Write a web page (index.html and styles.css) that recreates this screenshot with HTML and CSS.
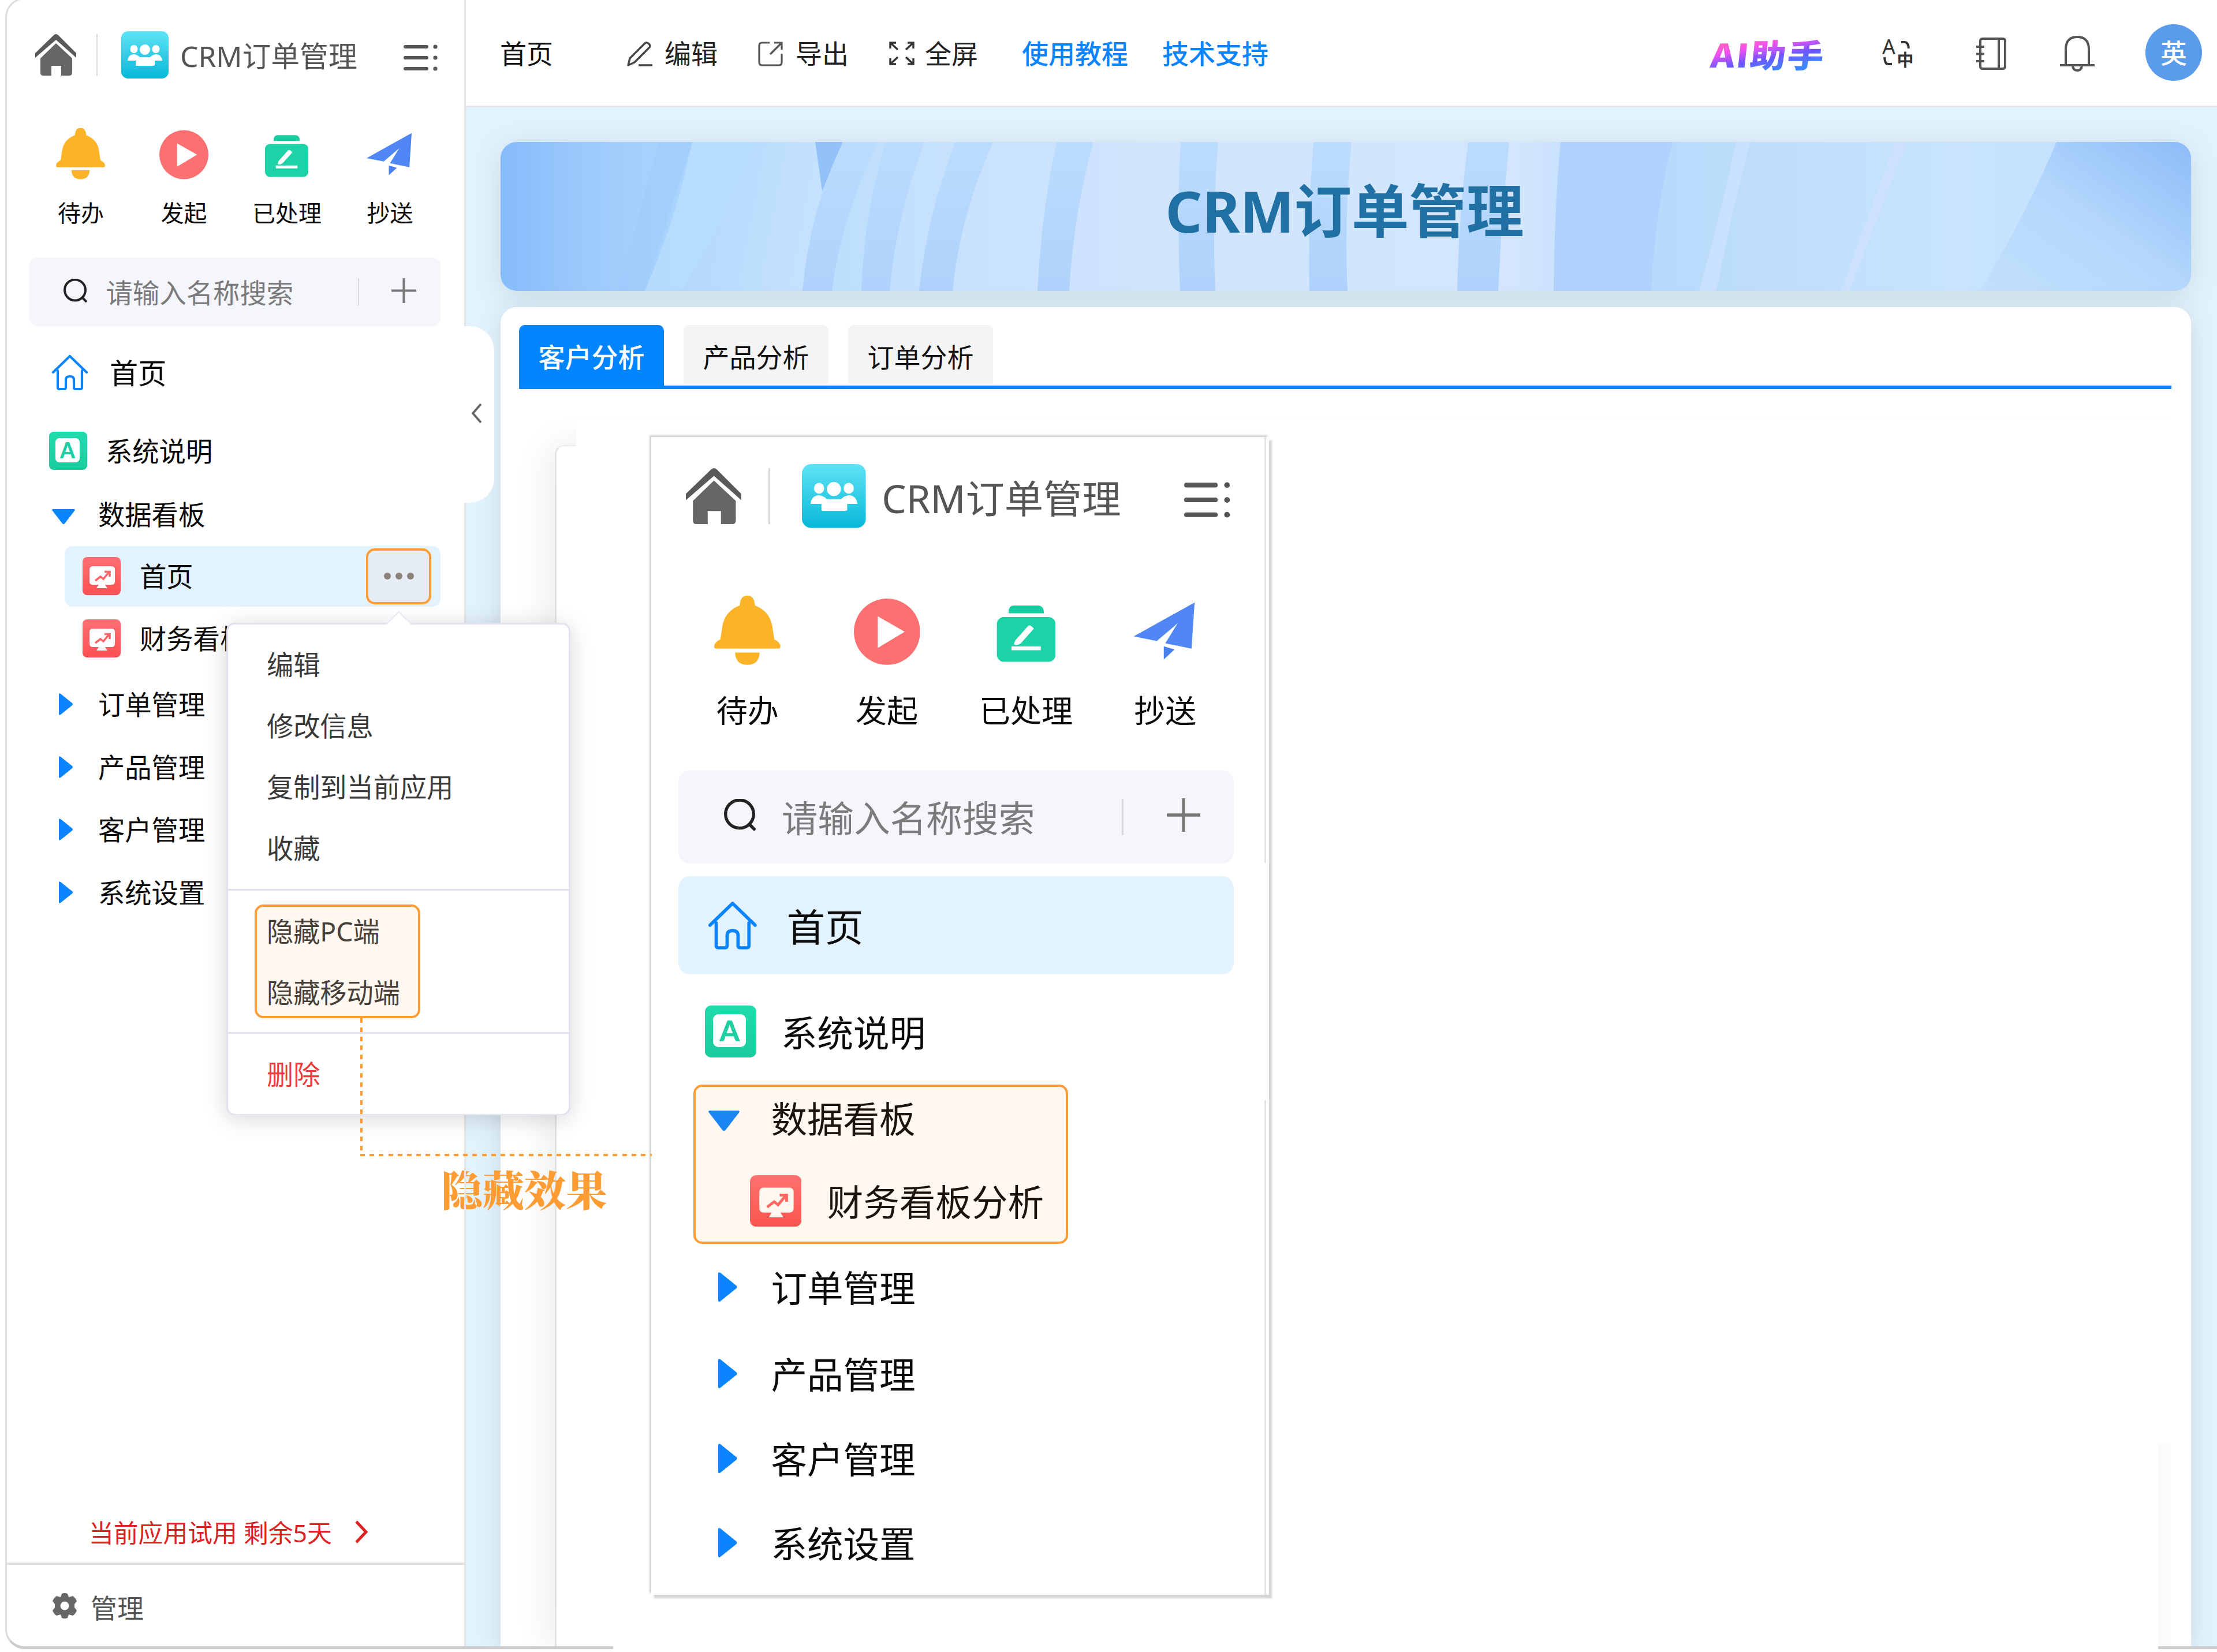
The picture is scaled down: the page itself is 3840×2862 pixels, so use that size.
FILE: index.html
```
<!DOCTYPE html>
<html lang="zh-CN">
<head>
  <meta charset="UTF-8">
  <meta name="viewport" content="width=device-width, initial-scale=1.0">
  <title>CRM订单管理</title>
  <link rel="stylesheet" href="styles.css">
</head>
<body>
<svg class="defs" width="0" height="0">
  <defs>
    <linearGradient id="gCyan" x1="0" y1="0" x2="0" y2="1"><stop offset="0" stop-color="#5fe3f5"/><stop offset="1" stop-color="#07b8d8"/></linearGradient>
    <linearGradient id="gRed" x1="0" y1="0" x2="0" y2="1"><stop offset="0" stop-color="#ff6f72"/><stop offset="1" stop-color="#fb5052"/></linearGradient>
  </defs>
  <symbol id="i-house" viewBox="0 0 71 72">
    <path d="M36 0Q38 0 40 2L71 33V41L36 10L0 41V33L32 2Q34 0 36 0Z" fill="#595959"/>
    <path d="M36 16L64 42V67Q64 72 59 72H45V55H28V72H14Q9 72 9 67V42Z" fill="#666"/>
  </symbol>
  <symbol id="i-app" viewBox="0 0 82 82">
    <rect width="82" height="82" rx="12" fill="url(#gCyan)"/>
    <g fill="#fff">
      <ellipse cx="22" cy="31" rx="6.5" ry="7"/><ellipse cx="60" cy="31" rx="6.5" ry="7"/><circle cx="41" cy="32" r="9"/>
      <path d="M11 51Q12 41 21 40Q27 40 32 45H50Q55 40 61 40Q70 41 71 51H58V59Q57 60 55 60H27Q25 60 25 59V51Z"/>
    </g>
  </symbol>
  <symbol id="i-list" viewBox="0 0 59 46">
    <g fill="#555"><rect y="1" width="43" height="6" rx="3"/><rect y="20" width="43" height="6" rx="3"/><rect y="39" width="43" height="6" rx="3"/>
    <circle cx="55" cy="4" r="3.6"/><circle cx="55" cy="23" r="3.6"/><circle cx="55" cy="42" r="3.6"/></g>
  </symbol>
  <symbol id="i-todo" viewBox="0 0 86 90">
    <g fill="#fbb428"><path d="M43 0Q52 0 53 13Q74 21 76 44L78 57Q86 61 86 66Q86 69 83 69H3Q0 69 0 66Q0 61 8 57L10 44Q12 21 33 13Q34 0 43 0Z"/><path d="M27 74H59Q58 90 43 90Q28 90 27 74Z"/></g>
  </symbol>
  <symbol id="i-play" viewBox="0 0 86 90"><circle cx="43" cy="47" r="43" fill="#fd7072"/><path d="M31 27L66 47L31 68Z" fill="#fff"/></symbol>
  <symbol id="i-done" viewBox="0 0 86 90">
    <path d="M20 23Q20 13 27 13H58Q66 13 66 23Z" fill="#16cda0"/>
    <rect x="5" y="28" width="76" height="58" rx="9" fill="#1ed2a7"/>
    <path d="M46 39Q49 38 53 43L36 62Q30 66 27 63L29 58Z" fill="#fff"/><rect x="24" y="66" width="38" height="5" fill="#fff"/>
  </symbol>
  <symbol id="i-send" viewBox="0 0 86 90">
    <path d="M81 9L77 69L43 62L59 36L32 59L2 53Z" fill="#5087f4"/><path d="M41 66L55 70L41 83Z" fill="#4a80ee"/>
  </symbol>
  <symbol id="i-search" viewBox="0 0 41 41"><circle cx="20" cy="19.500" r="18" fill="none" stroke="#222" stroke-width="4"/><path d="M32 32L40 40" stroke="#222" stroke-width="4"/></symbol>
  <symbol id="i-plus" viewBox="0 0 43 43"><path d="M21.500 0V43M0 21.500H43" stroke="#777" stroke-width="4"/></symbol>
  <symbol id="i-home" viewBox="0 0 62 62">
    <path d="M2 31L31 3L60 31M10 28V57Q10 60 13 60H21Q24 60 24 57V44Q24 38 31 38Q38 38 38 44V57Q38 60 41 60H49Q52 60 52 57V28" fill="none" stroke="#0a84ff" stroke-width="4.200" stroke-linecap="round" stroke-linejoin="round"/>
  </symbol>
  <symbol id="i-board" viewBox="0 0 66 66">
    <rect width="66" height="66" rx="8" fill="url(#gRed)"/>
    <path d="M18 16H50Q56 16 56 22V42Q56 48 50 48H39L43 54H24L28 48H18Q12 48 12 42V22Q12 16 18 16Z" fill="#fff"/>
    <path d="M22 41L31 34L36 38L46 26M38 25.500H47V34" fill="none" stroke="#ff6466" stroke-width="3.500"/>
  </symbol>
  <symbol id="i-down" viewBox="0 0 40 26"><path d="M2 0H38Q41 0 39 3L22 25Q20 27 18 25L1 3Q-1 0 2 0Z" fill="#0a84ff"/></symbol>
  <symbol id="i-right" viewBox="0 0 24 38"><path d="M0 2Q0-1 3 1L23 17Q25 19 23 21L3 37Q0 39 0 36Z" fill="#0a84ff"/></symbol>
  <symbol id="i-edit" viewBox="0 0 44 44"><path d="M2 42L5 30L31 4Q34 1 38 5Q42 9 38 12L13 37ZM20 42H44" fill="none" stroke="#444" stroke-width="3.400" stroke-linejoin="round"/></symbol>
  <symbol id="i-export" viewBox="0 0 44 44"><path d="M20 3H7Q2 3 2 8V37Q2 42 7 42H36Q41 42 41 37V22M28 3H41V15M41 3L21 23" fill="none" stroke="#555" stroke-width="3.200"/></symbol>
  <symbol id="i-full" viewBox="0 0 44 44"><path d="M2 13V3H12M2 3L15 15M32 3H42V13M42 3L29 15M2 30V40H12M2 40L15 28M32 40H42V30M42 40L29 28" fill="none" stroke="#333" stroke-width="3.400"/></symbol>
  <symbol id="i-book" viewBox="0 0 52 56"><path d="M11 2H46Q50 2 50 6V50Q50 54 46 54H11Q7 54 7 50V6Q7 2 11 2ZM39 2V54M0 16H14M0 28.500H14M0 41H14" fill="none" stroke="#555" stroke-width="4"/></symbol>
  <symbol id="i-bell" viewBox="0 0 60 62"><path d="M10 50V22Q11 2 30 2Q49 2 50 22V50M0 51H60M22 52Q23 60 30 60Q37 60 38 52" fill="none" stroke="#555" stroke-width="4"/></symbol>
  <symbol id="i-gear" viewBox="0 0 44 44"><path fill-rule="evenodd" fill="#666" d="M17 1Q22-1 27 1L29 7L36 5Q41 8 43 14L39 19V25L43 30Q41 36 36 39L29 37L27 43Q22 45 17 43L15 37L8 39Q3 36 1 30L5 25V19L1 14Q3 8 8 5L15 7ZM22 14.500A7.500 7.500 0 1 0 22 29.500A7.500 7.500 0 1 0 22 14.500Z"/></symbol>
</svg>

<div class="frame">
  <aside class="sidebar">
    <div class="nav">
      <div class="nav-top">
        <svg class="ico-house"><use href="#i-house"/></svg>
        <i class="bar"></i>
        <svg class="ico-app"><use href="#i-app"/></svg>
        <span class="app-name">CRM订单管理</span>
        <svg class="ico-list"><use href="#i-list"/></svg>
      </div>
      <div class="quick">
        <div><svg><use href="#i-todo"/></svg><span>待办</span></div>
        <div><svg><use href="#i-play"/></svg><span>发起</span></div>
        <div><svg><use href="#i-done"/></svg><span>已处理</span></div>
        <div><svg><use href="#i-send"/></svg><span>抄送</span></div>
      </div>
      <div class="search">
        <svg class="ico-search"><use href="#i-search"/></svg>
        <span class="placeholder">请输入名称搜索</span>
        <i class="bar"></i>
        <svg class="ico-plus"><use href="#i-plus"/></svg>
      </div>
      <div class="row home"><svg><use href="#i-home"/></svg><span>首页</span></div>
      <div class="row doc"><b class="ico-doc"><i>A</i></b><span>系统说明</span></div>
      <div class="row group open"><svg><use href="#i-down"/></svg><span>数据看板</span></div>
      <div class="row child active"><svg><use href="#i-board"/></svg><span>首页</span><b class="more"><i></i><i></i><i></i></b></div>
      <div class="row child second"><svg><use href="#i-board"/></svg><span>财务看板分析</span></div>
      <div class="row group first"><svg><use href="#i-right"/></svg><span>订单管理</span></div>
      <div class="row group"><svg><use href="#i-right"/></svg><span>产品管理</span></div>
      <div class="row group"><svg><use href="#i-right"/></svg><span>客户管理</span></div>
      <div class="row group"><svg><use href="#i-right"/></svg><span>系统设置</span></div>
    </div>
    <div class="trial">
      <span>当前应用试用 剩余5天</span>
      <svg viewBox="0 0 24 40"><path d="M3 2L20 20L3 38" fill="none" stroke="#dd2222" stroke-width="5"/></svg>
    </div>
    <div class="manage"><svg><use href="#i-gear"/></svg><span>管理</span></div>
    <div class="collapse"><svg viewBox="0 0 20 36"><path d="M17 2L3 18L17 34" fill="none" stroke="#666" stroke-width="3.800"/></svg></div>
  </aside>

  <main class="main">
    <header class="header">
      <span class="crumb">首页</span>
      <a class="act"><svg><use href="#i-edit"/></svg>编辑</a>
      <a class="act"><svg><use href="#i-export"/></svg>导出</a>
      <a class="act"><svg><use href="#i-full"/></svg>全屏</a>
      <a class="link">使用教程</a>
      <a class="link">技术支持</a>
      <span class="ai">AI助手</span>
      <svg class="ico-lang" viewBox="0 0 53 52">
        <text x="12.500" y="27" text-anchor="middle">A</text>
        <text class="zh" x="41" y="48" text-anchor="middle">中</text>
        <path d="M34 6H40Q46 6 47 17M5 32Q6 44 11 44H18" fill="none" stroke="#333" stroke-width="4"/>
      </svg>
      <svg class="ico-book"><use href="#i-book"/></svg>
      <svg class="ico-bell"><use href="#i-bell"/></svg>
      <span class="avatar">英</span>
    </header>
    <div class="content">
      <div class="banner">
        <svg viewBox="0 0 2928 258" preserveAspectRatio="none">
          <defs>
            <linearGradient id="bBase">
              <stop offset="0" stop-color="#86bbfb"/><stop offset=".05" stop-color="#9ccafc"/><stop offset=".1" stop-color="#a8d3fc"/>
              <stop offset=".2" stop-color="#bddffd"/><stop offset=".28" stop-color="#c8e2fd"/><stop offset=".38" stop-color="#d0e4fd"/>
              <stop offset=".6" stop-color="#d3e6fe"/><stop offset=".68" stop-color="#b9d9fc"/><stop offset=".75" stop-color="#bedefb"/>
              <stop offset=".86" stop-color="#c8e4fe"/><stop offset="1" stop-color="#c0dffd"/>
            </linearGradient>
            <linearGradient id="bRight" x1="0" y1="1" x2="1" y2="0"><stop offset="0" stop-color="#c2e0fd"/><stop offset=".5" stop-color="#b4d7fc"/><stop offset="1" stop-color="#8cbcf8"/></linearGradient>
            <linearGradient id="bStripe" x1="0" y1="0" x2="0" y2="1"><stop offset="0" stop-color="#bbdcfd"/><stop offset="1" stop-color="#afd2fc"/></linearGradient>
            <linearGradient id="bMid" x1="0" y1="0" x2="1" y2="0.200"><stop offset="0" stop-color="#b0d7fb"/><stop offset="1" stop-color="#c4e2fe"/></linearGradient>
          </defs>
          <rect width="2928" height="258" fill="url(#bBase)"/>
          <path d="M274 0H332L250 258H203Z" fill="#9fccfb" opacity=".6"/>
          <path d="M332 0H442Q390 140 313 258H250Q305 130 332 0Z" fill="#b9defd" opacity=".8"/>
          <path d="M442 0H547L557 85L523 258H313Q390 130 442 0Z" fill="url(#bMid)"/>
          <path d="M545 0H593L557 85Z" fill="#93c2fb"/>
          <path d="M593 0H654Q590 130 574 258H523Q535 120 593 0Z" fill="url(#bStripe)"/>
          <path d="M667 0H734Q685 130 674 258H625Q630 120 667 0Z" fill="url(#bStripe)"/>
          <path d="M788 0H853Q795 130 783 258H725Q740 120 788 0Z" fill="url(#bStripe)"/>
          <path d="M963 0H1027Q993 120 985 258H930Q937 120 963 0Z" fill="url(#bStripe)"/>
          <path d="M1178 0H1243Q1232 130 1238 258H1177Q1171 120 1178 0Z" fill="url(#bStripe)"/>
          <path d="M1408 0H1474Q1461 130 1467 258H1401Q1398 120 1408 0Z" fill="url(#bStripe)"/>
          <path d="M1676 0H1747Q1734 130 1728 258H1657Q1660 120 1676 0Z" fill="url(#bStripe)"/>
          <path d="M1836 0H2030Q2000 120 1993 258H1824Q1825 120 1836 0Z" fill="#afd3fd"/>
          <path d="M2140 0H2165Q2130 130 2106 258H2076Q2115 120 2140 0Z" fill="#c8e1fe"/>
          <path d="M2415 0H2437L2336 258H2322Z" fill="#cbe1fe"/>
          <path d="M2695 0H2928V258H2562Q2640 130 2695 0Z" fill="url(#bRight)"/>
        </svg>
        <h1>CRM订单管理</h1>
      </div>
      <section class="panel">
        <nav class="tabs">
          <span class="tab on">客户分析</span>
          <span class="tab">产品分析</span>
          <span class="tab">订单分析</span>
        </nav>
        <div class="board">
          <div class="sheet"></div>
          <div class="edge"></div>
        </div>
      </section>
    </div>
  </main>
</div>
<div class="mask"></div>

<!-- context menu of the active item -->
<div class="menu">
  <div class="menu-group">
    <span>编辑</span><span>修改信息</span><span>复制到当前应用</span><span>收藏</span>
  </div>
  <div class="menu-group hide-group">
    <span>隐藏PC端</span><span>隐藏移动端</span>
    <div class="mark mark-hide"></div>
  </div>
  <div class="menu-group"><span class="danger">删除</span></div>
</div>

<div class="wire-v"></div>
<div class="wire-h"></div>
<div class="note">隐藏效果</div>

<!-- sidebar after the item is hidden -->
<div class="preview">
  <div class="clip">
    <div class="nav">
      <div class="nav-top">
        <svg class="ico-house"><use href="#i-house"/></svg>
        <i class="bar"></i>
        <svg class="ico-app"><use href="#i-app"/></svg>
        <span class="app-name">CRM订单管理</span>
        <svg class="ico-list"><use href="#i-list"/></svg>
      </div>
      <div class="quick">
        <div><svg><use href="#i-todo"/></svg><span>待办</span></div>
        <div><svg><use href="#i-play"/></svg><span>发起</span></div>
        <div><svg><use href="#i-done"/></svg><span>已处理</span></div>
        <div><svg><use href="#i-send"/></svg><span>抄送</span></div>
      </div>
      <div class="search">
        <svg class="ico-search"><use href="#i-search"/></svg>
        <span class="placeholder">请输入名称搜索</span>
        <i class="bar"></i>
        <svg class="ico-plus"><use href="#i-plus"/></svg>
      </div>
      <div class="row home active"><svg><use href="#i-home"/></svg><span>首页</span></div>
      <div class="row doc"><b class="ico-doc"><i>A</i></b><span>系统说明</span></div>
      <div class="row group open"><svg><use href="#i-down"/></svg><span>数据看板</span></div>
      <div class="row child only"><svg><use href="#i-board"/></svg><span>财务看板分析</span></div>
      <div class="row group first"><svg><use href="#i-right"/></svg><span>订单管理</span></div>
      <div class="row group next"><svg><use href="#i-right"/></svg><span>产品管理</span></div>
      <div class="row group"><svg><use href="#i-right"/></svg><span>客户管理</span></div>
      <div class="row group"><svg><use href="#i-right"/></svg><span>系统设置</span></div>
    </div>
    <i class="rule rule-top"></i>
    <i class="rule rule-bottom"></i>
    <div class="mark mark-result"></div>
  </div>
</div>
</body>
</html>
```
FILE: styles.css
```
* {box-sizing: border-box;}
html, body {margin: 0;width: 3840px;height: 2862px;overflow: hidden;}
body {position: relative;background: #fff;color: #111;font-family: "Noto Sans","Noto Sans CJK SC",sans-serif;font-size: 46px;line-height: 1.3;}
svg {display: block;flex: none;}
.defs {position: absolute;}
span, a {white-space: nowrap;}

.frame {display: flex;height: 2861px;margin: -4px 0 0 9px;border: 3px solid #dcdcdc;border-right: 0;border-bottom: 5px solid #ccc;border-radius: 34px 0 0 34px;overflow: hidden;}
.sidebar {position: relative;width: 795px;flex: none;display: flex;flex-direction: column;border-right: 3px solid #e4e4e4;padding-top: 1px;z-index: 2;font-size: 10px;}

/* nav is sized in em so the same block can be shown larger */
.nav {width: 79.2em;color: #0a0a0a;}
.nav-top {display: flex;align-items: center;height: 18.9em;padding-left: 4.9em;}
.ico-house {width: 7.1em;height: 7.2em;}
.nav-top .bar {width: .2em;height: 7.2em;margin: 0 4.1em 0 3.5em;background: #d8d8d8;}
.ico-app {width: 8.2em;height: 8.2em;}
.app-name {font-size: 4.98em;color: #555;width: 8.18em;padding: .13em 0 0 .4em;}
.ico-list {width: 5.9em;height: 4.6em;margin-top: 1em;}

.quick {display: grid;grid-template-columns: repeat(4, 17.85em);padding: 3.2em 0 0 3.87em;}
.quick div {display: flex;flex-direction: column;align-items: center;}
.quick svg {width: 8.5em;height: 9em;}
.quick span {font-size: 4em;line-height: 1.2em;margin-top: .86em;}

.search {display: flex;align-items: center;width: 71.2em;height: 11.9em;margin: 5.3em 0 0 3.9em;padding-left: 5.9em;background: #f5f6fb;border-radius: 1.4em;}
.ico-search {width: 4.1em;height: 4.1em;margin-top: -.5em;}
.placeholder {font-size: 4.64em;color: #7b7b7b;width: 10.1em;padding: .05em 0 0 .7em;}
.search .bar {width: .2em;height: 4.7em;background: #d8d9df;}
.ico-plus {width: 4.3em;height: 4.3em;margin: -.5em 0 0 5.6em;}

.row {display: flex;align-items: center;height: 10.85em;}
.row span {font-size: 4.63em;}
.row.home {width: 71.2em;height: 12.6em;margin: 1.65em 0 0 3.9em;padding-left: 3.9em;border-radius: 1.5em;}
.home svg {width: 6.2em;height: 6.2em;margin-right: 3.8em;}
.row.home span {font-size: 4.92em;padding-top: .06em;}
.row.doc {height: 14.7em;padding-left: 7.3em;}
.ico-doc {display: flex;align-items: center;justify-content: center;width: 6.6em;height: 6.6em;margin: 0 3.2em .1em 0;padding: 1.1em 1.3em 1.3em 1.1em;border-radius: .8em;background: linear-gradient(#20dbad, #1ccb9d);}
.ico-doc i {width: 4.2em;height: 4.2em;border-radius: .7em;background: #fff;text-align: center;color: #1fcfa3;font-family: Lato,sans-serif;font-style: normal;font-weight: 900;line-height: 4.2em;}
.ico-doc i {font-size: 1em;}
.ico-doc i::first-letter {font-size: 3.7em;}
.doc span {padding-top: .04em;}
.row.group {padding-left: 9em;}
.group svg {width: 2.4em;height: 3.8em;margin-right: 4.4em;margin-top: -.15em;}
.row.group.open {height: 7.5em;padding-left: 7.8em;}
.open svg {width: 4em;height: 2.6em;margin: .6em 4em 0 0;}
.row.child {height: 10.5em;margin-left: 10em;padding-left: 3.1em;width: 65.1em;border-radius: 1.4em;margin-top: 1.6em;}
.child svg {width: 6.6em;height: 6.6em;margin-right: 3.3em;}
.child span {padding-top: .04em;}
.row.child.second {margin-top: .3em;}
.row.group.first {margin-top: .8em;}
.row.active {background: #e3f2ff;}
.row .more {display: flex;justify-content: center;align-items: center;gap: .8em;width: 11.3em;height: 9.7em;margin: 0 1.6em 0 auto;border: .4em solid #ff9c33;border-radius: 1.5em;background: #e5ecf4;}
.more i {width: 1.2em;height: 1.2em;border-radius: 50%;background: #8c837c;}

.trial {display: flex;align-items: center;height: 103px;margin-top: auto;padding-left: 142px;font-size: 42.8px;color: #dd2222;}
.trial svg {width: 24px;height: 40px;margin: -3px 0 0 39px;}
.manage {display: flex;align-items: center;height: 145px;border-top: 4px solid #e2e2e2;padding: 8px 0 0 78px;font-size: 46px;color: #555;}
.manage svg {width: 44px;height: 44px;margin: -8px 23px 0 0;}
.collapse {position: absolute;left: 780px;top: 566px;width: 64px;height: 306px;padding: 133px 0 0 24px;background: #fff;border-radius: 0 42px 42px 0;}
.collapse svg {width: 20px;height: 36px;}

.main {flex: 1;display: flex;flex-direction: column;background: #e3f3fe;min-width: 0;}
.header {display: flex;align-items: center;flex: none;height: 187px;padding: 4px 26px 0 59px;background: #fff;border-bottom: 3px solid #e6e6e8;}
.crumb {margin-right: 128px;}
.act {display: flex;align-items: center;color: #222;margin-right: 70px;}
.act svg {width: 44px;height: 44px;margin-right: 21px;}
.act:nth-child(4) svg {margin-right: 18px;}
.link {color: #0a84ff;margin-right: 59px;font-weight: 500;}
.act + .link {margin-left: 6px;}
.ai {margin-left: auto;margin-right: 97px;font-family: "Noto Sans CJK SC",sans-serif;font-size: 56px;font-weight: 900;letter-spacing: 2px;line-height: 70px;background: linear-gradient(168deg, #ff5fc8 22%, #f050f0 36%, #6a58ff 58%, #3f86ff 80%);-webkit-background-clip: text;background-clip: text;color: transparent;transform: skewX(-6deg) scaleX(1.12);transform-origin: right center;}
.ico-lang {width: 53px;height: 52px;margin-right: 111px;overflow: visible;font-size: 36px;fill: #333;}
.ico-lang .zh {font-family: "Noto Sans CJK SC",sans-serif;font-size: 29px;font-weight: 700;}
.ico-book {width: 52px;height: 56px;margin-right: 93px;}
.ico-bell {width: 60px;height: 62px;margin-right: 88px;}
.avatar {width: 98px;height: 98px;margin-top: -5px;border-radius: 50%;background: #5b9bec;color: #fff;font-weight: 500;line-height: 99px;text-align: center;}

.content {flex: 1;display: flex;flex-direction: column;padding: 60px 45px 0 60px;}
.banner {position: relative;height: 258px;flex: none;border-radius: 28px;box-shadow: 0 8px 50px rgba(90,110,120,.2);}
.banner svg {width: 100%;height: 100%;border-radius: 28px;}
.banner h1 {position: absolute;left: 0;right: 4px;top: 60px;margin: 0;text-align: center;font-size: 99.5px;line-height: 118px;font-weight: 700;color: #2070a4;}

.panel {position: relative;flex: 1;margin-top: 28px;padding: 31px 34px 0 32px;background: #fff;border-radius: 28px 28px 0 0;box-shadow: 0 8px 44px rgba(90,110,120,.2);display: flex;flex-direction: column;}
.tabs {display: flex;gap: 34px;height: 111px;border-bottom: 6px solid #0a84ff;}
.tab {width: 251px;height: 102px;line-height: 110px;text-align: center;background: #f4f4f4;border-radius: 10px 10px 0 0;}
.tab.on {height: 106px;background: #0085ff;color: #fff;font-weight: 500;}

.board {position: relative;flex: 1;margin: 97px -34px 0 62px;border-left: 3px solid #e3e3e3;border-top: 2px solid #ececec;border-radius: 16px 0 0 0;box-shadow: -12px 0 60px rgba(0,0,0,.08);clip-path: inset(-90px 0 0 -90px);}
.sheet {position: absolute;left: 34px;right: 0;top: -45px;bottom: 0;background: #fff;}
.edge {position: absolute;right: 35px;bottom: 2px;width: 22px;height: 348px;background: #fbfbfb;}
.mask {position: absolute;left: 1062px;top: 2849px;width: 2676px;height: 13px;background: #fff;}

.menu {position: absolute;z-index: 3;left: 392px;top: 1079px;width: 596px;height: 853px;background: #fff;border: 3px solid #e1e4ec;border-radius: 14px;box-shadow: 0 6px 40px rgba(0,0,0,.16);color: #3a3a3a;}
.menu:before {content: "";position: absolute;left: 280px;top: -17px;width: 30px;height: 30px;background: #fff;border: 2px solid #e6e9f0;border-right: 0;border-bottom: 0;transform: rotate(45deg);}
.menu-group {position: relative;display: flex;flex-direction: column;padding: 16px 0 16px 67px;background: #fff;border-radius: 14px;}
.menu-group + .menu-group {border-top: 3px solid #dfe1ea;border-radius: 0 0 14px 14px;padding-top: 17px;}
.menu-group:first-child {height: 458px;}
.hide-group {height: 248px;}
.menu-group span {height: 106px;line-height: 108px;font-size: 46.2px;}
.menu-group .danger {color: #e93b3b;}

.mark {position: absolute;border: 4px solid #ff9c33;border-radius: 15px;background: rgba(255,156,51,.07);}
.mark-hide {left: 46px;top: 24px;width: 287px;height: 197px;}
.wire-v, .wire-h {position: absolute;z-index: 3;}
.wire-v {left: 624px;top: 1764px;width: 4px;height: 238px;background: repeating-linear-gradient(to bottom, #ff9c33 0 8px, transparent 8px 15.8px);}
.wire-h {left: 624px;top: 1999px;width: 505px;height: 4px;background: repeating-linear-gradient(to right, #ff9c33 0 8px, transparent 8px 16.2px);}
.note {position: absolute;left: 764px;top: 2016px;font-family: "Noto Serif CJK SC","Noto Sans CJK SC",serif;font-size: 72px;line-height: 84px;font-weight: 900;color: #ff9c33;}

.preview {position: absolute;z-index: 2;left: 1128px;top: 757px;width: 1070px;height: 2006px;background: #fff;box-shadow: -3px -3px 3px #cfcfcf, 5px 6px 3px #d4d4d4;font-size: 13.51px;}
.clip {position: relative;height: 100%;overflow: hidden;}
.preview .nav {margin: -25px 0 0 -6px;}
.preview .row.group.first {margin-top: .4em;}
.preview .row.group.next {margin-top: .3em;}
.mark-result {left: 73px;top: 1122px;width: 649px;height: 276px;}
.rule {position: absolute;right: 5px;width: 3px;background: #e4e4e4;}
.rule-top {top: 0;height: 738px;}
.rule-bottom {top: 1149px;bottom: 0;}
```
